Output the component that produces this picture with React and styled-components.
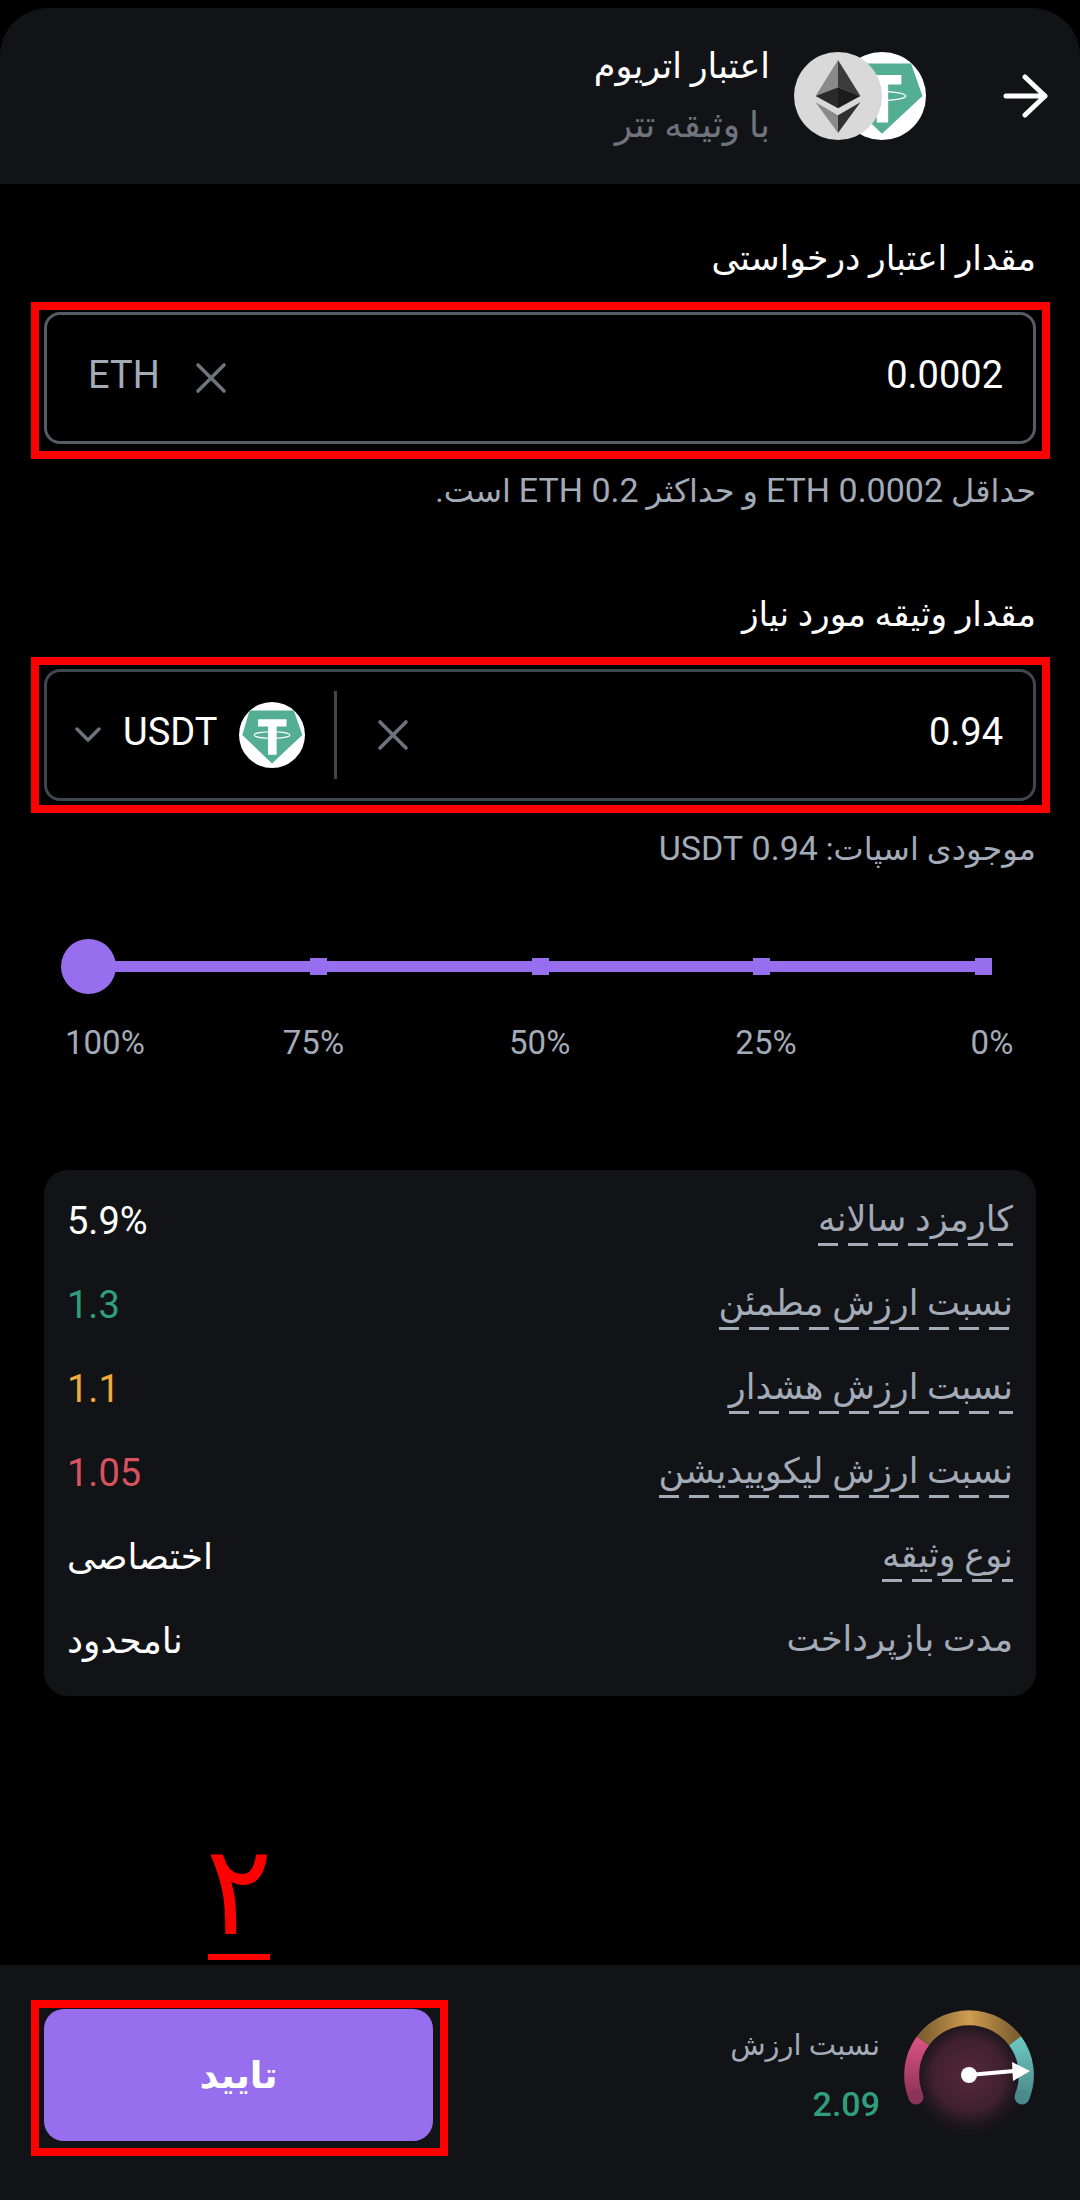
import React from "react";
import styled, { createGlobalStyle } from "styled-components";

const rows = [
  { label: "کارمزد سالانه", value: "5.9%", tone: "#ffffff", size: 38, dashed: true },
  { label: "نسبت ارزش مطمئن", value: "1.3", tone: "#2f9e7c", size: 38, dashed: true },
  { label: "نسبت ارزش هشدار", value: "1.1", tone: "#efa93c", size: 38, dashed: true },
  { label: "نسبت ارزش لیکوییدیشن", value: "1.05", tone: "#d9525e", size: 38, dashed: true },
  { label: "نوع وثیقه", value: "اختصاصی", tone: "#ffffff", size: 36, dashed: true },
  { label: "مدت بازپرداخت", value: "نامحدود", tone: "#ffffff", size: 36, dashed: false },
];

const ticks = [0, 25, 50, 75, 100];

const marks = [
  { label: "100%", gap: 21 },
  { label: "75%", gap: 138 },
  { label: "50%", gap: 165 },
  { label: "25%", gap: 165 },
  { label: "0%", gap: 174 },
];

const TetherLogo = ({ size }) => (
  <svg width={size} height={size} viewBox="0 0 100 100">
    <circle cx="50" cy="50" r="50" fill="#fff" />
    <path d="M16 13H83L96 50 50 93 5 50Z" fill="#53ae94" />
    <path d="M29 26H72V37H57V80H44V37H29Z" fill="#fff" />
    <ellipse cx="50" cy="50" rx="27" ry="5" fill="none" stroke="#fff" strokeWidth="1.6" />
  </svg>
);

const EthLogo = ({ size }) => (
  <svg width={size} height={size} viewBox="0 0 100 100">
    <circle cx="50" cy="50" r="50" fill="#d9d9d9" />
    <path d="M50 9 24.5 50 50 40Z" fill="#8a8a8a" />
    <path d="M50 9 75.5 50 50 40Z" fill="#3b3b3b" />
    <path d="M24.5 50 50 40V64Z" fill="#2a2a2a" />
    <path d="M75.5 50 50 40V64Z" fill="#1c1c1c" />
    <path d="M24.5 57 50 72V92Z" fill="#8a8a8a" />
    <path d="M75.5 57 50 72V92Z" fill="#303030" />
  </svg>
);

const Gauge = () => (
  <svg width="150" height="150" viewBox="0 0 150 150">
    <defs>
      <radialGradient id="glow" cx="50%" cy="50%" r="50%">
        <stop offset="0%" stopColor="#54283a" />
        <stop offset="55%" stopColor="#40202f" />
        <stop offset="100%" stopColor="#121316" stopOpacity="0" />
      </radialGradient>
      <linearGradient id="pink" x1="0" y1="0" x2="0" y2="1">
        <stop offset="0%" stopColor="#d8527f" />
        <stop offset="100%" stopColor="#8b3358" />
      </linearGradient>
      <linearGradient id="gold" x1="0" y1="0" x2="1" y2="0">
        <stop offset="0%" stopColor="#7d6030" />
        <stop offset="50%" stopColor="#d09c50" />
        <stop offset="100%" stopColor="#7d6030" />
      </linearGradient>
      <linearGradient id="teal" x1="0" y1="0" x2="0" y2="1">
        <stop offset="0%" stopColor="#6cc6c0" />
        <stop offset="100%" stopColor="#4a8a8a" />
      </linearGradient>
    </defs>
    <circle cx="75" cy="70" r="66" fill="url(#glow)" />
    <path d="M22 92A57.5 57.5 0 0 1 29 35.7" fill="none" stroke="url(#pink)" strokeWidth="15" />
    <circle cx="22" cy="92" r="7.5" fill="#8b3358" />
    <path d="M29 35.7A57.5 57.5 0 0 1 121 35.7" fill="none" stroke="url(#gold)" strokeWidth="15" />
    <path d="M128 92A57.5 57.5 0 0 0 121 35.7" fill="none" stroke="url(#teal)" strokeWidth="15" />
    <circle cx="128" cy="92" r="7.5" fill="#4a8a8a" />
    <circle cx="75" cy="70" r="8" fill="#fff" />
    <path d="M75 70 120 66" stroke="#fff" strokeWidth="4" />
    <path d="M118 57 136 66 119 76Z" fill="#fff" />
  </svg>
);

const ArrowIcon = () => (
  <svg width="46" height="46" viewBox="0 0 46 46" fill="none" stroke="#fff" strokeWidth="5" strokeLinecap="round" strokeLinejoin="round">
    <path d="M3 23H42M22 4 42 23 22 42" />
  </svg>
);

const CloseIcon = () => (
  <svg width="32" height="32" viewBox="0 0 32 32" fill="none" stroke="#6e747d" strokeWidth="3.6" strokeLinecap="round">
    <path d="M3 3 29 29M29 3 3 29" />
  </svg>
);

const ChevronIcon = () => (
  <svg width="26" height="16" viewBox="0 0 26 16" fill="none" stroke="#6e747d" strokeWidth="3.4" strokeLinecap="round" strokeLinejoin="round">
    <path d="M2 2 13 13 24 2" />
  </svg>
);

const App = () => {
  return (
    <Page>
      <GlobalStyle />
      <Header>
        <ArrowIcon />
        <Logos>
          <TetherSlot>
            <TetherLogo size={88} />
          </TetherSlot>
          <EthSlot>
            <EthLogo size={88} />
          </EthSlot>
        </Logos>
        <HeaderText>
          <HeaderTitle>اعتبار اتریوم</HeaderTitle>
          <HeaderSub>با وثیقه تتر</HeaderSub>
        </HeaderText>
      </Header>

      <Form>
        <Label>مقدار اعتبار درخواستی</Label>
        <FieldWrap>
          <Field $border="#555c66">
            <Value>0.0002</Value>
            <Spacer />
            <FieldClose>
              <CloseIcon />
            </FieldClose>
            <Unit>ETH</Unit>
          </Field>
          <RedBox $top={-10} $bottom={-15} />
        </FieldWrap>
        <Hint>
          حداقل <Latin>0.0002 ETH</Latin> و حداکثر <Latin>0.2 ETH</Latin> است.
        </Hint>

        <SecondLabel>مقدار وثیقه مورد نیاز</SecondLabel>
        <FieldWrap>
          <Field $border="#3f4650">
            <Value>0.94</Value>
            <Spacer />
            <CloseIcon />
            <Divider />
            <TetherLogo size={66} />
            <Coin>USDT</Coin>
            <ChevronIcon />
          </Field>
          <RedBox $top={-12} $bottom={-12} />
        </FieldWrap>
        <SecondHint>
          موجودی اسپات: <Latin>0.94 USDT</Latin>
        </SecondHint>

        <Slider>
          <Track>
            {ticks.map((tick) => (
              <Tick key={tick} />
            ))}
            <Thumb />
          </Track>
          <Marks>
            {marks.map((mark) => (
              <Mark key={mark.label} $gap={mark.gap}>
                {mark.label}
              </Mark>
            ))}
          </Marks>
        </Slider>

        <Card>
          {rows.map((row) => (
            <Row key={row.label}>
              <RowLabel $dashed={row.dashed}>{row.label}</RowLabel>
              <RowValue $tone={row.tone} $size={row.size}>
                {row.value}
              </RowValue>
            </Row>
          ))}
        </Card>
      </Form>

      <Note>
        <NoteDigit>۲</NoteDigit>
        <NoteLine />
      </Note>

      <Footer>
        <GaugeSlot>
          <Gauge />
        </GaugeSlot>
        <Ratio>
          <RatioLabel>نسبت ارزش</RatioLabel>
          <RatioValue>2.09</RatioValue>
        </Ratio>
        <ButtonWrap>
          <Confirm>تایید</Confirm>
          <ButtonBox />
        </ButtonWrap>
      </Footer>
    </Page>
  );
};

const GlobalStyle = createGlobalStyle`
  html, body {
    margin: 0;
    padding: 0;
    background: #000;
  }
  * {
    box-sizing: border-box;
  }
`;

const Page = styled.div`
  width: 1080px;
  height: 2200px;
  direction: rtl;
  display: flex;
  flex-direction: column;
  background: #000;
  color: #fff;
  font-family: Roboto, "DejaVu Sans", sans-serif;
  overflow: hidden;
`;

const Header = styled.header`
  margin-top: 8px;
  height: 176px;
  flex: none;
  display: flex;
  align-items: center;
  padding-right: 31px;
  background: #121316;
  border-radius: 48px 48px 0 0;
`;

const Logos = styled.div`
  position: relative;
  width: 132px;
  height: 88px;
  margin-right: 77px;
`;

const TetherSlot = styled.div`
  position: absolute;
  top: 0;
  right: 0;
  height: 88px;
`;

const EthSlot = styled.div`
  position: absolute;
  top: 0;
  left: 0;
  height: 88px;
`;

const HeaderText = styled.div`
  margin-right: 24px;
  display: flex;
  flex-direction: column;
  gap: 14px;
`;

const HeaderTitle = styled.div`
  font-size: 35px;
  line-height: 44px;
`;

const HeaderSub = styled.div`
  font-size: 36px;
  line-height: 44px;
  color: #6e747d;
`;

const Form = styled.main`
  display: flex;
  flex-direction: column;
  padding: 48px 44px 0;
`;

const Label = styled.div`
  font-size: 34.5px;
  line-height: 52px;
  margin-bottom: 28px;
`;

const SecondLabel = styled(Label)`
  margin-top: 78px;
  margin-bottom: 29px;
`;

const FieldWrap = styled.div`
  position: relative;
  height: 132px;
`;

const RedBox = styled.div`
  position: absolute;
  top: ${(p) => p.$top}px;
  bottom: ${(p) => p.$bottom}px;
  left: -13px;
  right: -14px;
  border: 8px solid #f00;
  pointer-events: none;
`;

const Field = styled.div`
  height: 100%;
  display: flex;
  align-items: center;
  padding: 0 30px 0 28px;
  border: 3px solid ${(p) => p.$border};
  border-radius: 16px;
`;

const Value = styled.div`
  font-size: 38px;
  margin-top: -6px;
`;

const Spacer = styled.div`
  flex: 1;
`;

const FieldClose = styled.div`
  display: flex;
  margin-left: 35px;
`;

const Unit = styled.div`
  font-size: 38px;
  color: #a3abb8;
  margin-left: 13px;
  margin-top: -6px;
`;

const Divider = styled.div`
  width: 3px;
  height: 88px;
  margin: 0 40px 0 29px;
  background: #3f4650;
`;

const Coin = styled.div`
  font-size: 38px;
  margin: -6px 22px 0;
`;

const Hint = styled.div`
  margin-top: 28px;
  height: 38px;
  font-size: 32px;
  line-height: 38px;
  color: #a3abb8;
`;

const SecondHint = styled(Hint)`
  margin-top: 29px;
`;

const Latin = styled.span`
  font-size: 34px;
  line-height: 1;
`;

const Slider = styled.div`
  margin-top: 71px;
  direction: ltr;
`;

const Track = styled.div`
  position: relative;
  margin: 0 44px;
  height: 55px;
  display: flex;
  align-items: center;
  justify-content: space-between;
  background: linear-gradient(#976fee, #976fee) center / 100% 11px no-repeat;
`;

const Tick = styled.div`
  width: 17px;
  height: 17px;
  background: #976fee;
`;

const Thumb = styled.div`
  position: absolute;
  left: -27px;
  top: 0;
  width: 55px;
  height: 55px;
  border-radius: 50%;
  background: #976fee;
`;

const Marks = styled.div`
  margin-top: 29px;
  display: flex;
`;

const Mark = styled.div`
  margin-left: ${(p) => p.$gap}px;
  font-size: 33px;
  line-height: 40px;
  color: #a3abb8;
`;

const Card = styled.section`
  margin-top: 107px;
  height: 526px;
  padding: 9px 23px;
  display: grid;
  grid-auto-rows: 84px;
  background: #121316;
  border-radius: 24px;
`;

const Row = styled.div`
  display: flex;
  align-items: center;
  justify-content: space-between;
`;

const RowLabel = styled.div`
  font-size: 35px;
  line-height: 48px;
  color: #a3abb8;
  padding-bottom: 2px;
  background: ${(p) =>
    p.$dashed
      ? "repeating-linear-gradient(to right, #a3abb8 0 20px, transparent 20px 30px) bottom / 100% 3px no-repeat"
      : "none"};
`;

const RowValue = styled.div`
  font-size: ${(p) => p.$size}px;
  color: ${(p) => p.$tone};
`;

const Note = styled.div`
  flex: 1;
  align-self: flex-end;
  direction: ltr;
  display: flex;
  flex-direction: column;
  align-items: center;
  justify-content: flex-end;
  width: 62px;
  margin-left: 208px;
  padding-bottom: 5px;
`;

const NoteDigit = styled.div`
  font-family: "DejaVu Sans", sans-serif;
  font-size: 125px;
  line-height: 100px;
  color: #f00;
`;

const NoteLine = styled.div`
  width: 62px;
  height: 6px;
  margin-top: 13px;
  background: #f00;
`;

const Footer = styled.footer`
  height: 235px;
  flex: none;
  display: flex;
  align-items: flex-start;
  padding: 40px 36px 0 44px;
  background: #121316;
`;

const GaugeSlot = styled.div`
  display: flex;
`;

const Ratio = styled.div`
  margin-right: 14px;
  display: flex;
  flex-direction: column;
  gap: 21px;
  padding-top: 21px;
`;

const RatioLabel = styled.div`
  font-size: 29px;
  line-height: 38px;
  color: #a3abb8;
`;

const RatioValue = styled.div`
  font-size: 34px;
  font-weight: 500;
  line-height: 38px;
  color: #2f9e7c;
`;

const ButtonWrap = styled.div`
  position: relative;
  margin-right: auto;
  margin-top: 4px;
  width: 389px;
  height: 132px;
`;

const Confirm = styled.button`
  width: 100%;
  height: 100%;
  border: 0;
  border-radius: 20px;
  background: #976fee;
  color: #fff;
  font-family: "DejaVu Sans", sans-serif;
  font-size: 37px;
  font-weight: 700;
`;

const ButtonBox = styled.div`
  position: absolute;
  top: -9px;
  right: -15px;
  bottom: -15px;
  left: -13px;
  border: 8px solid #f00;
`;

export default App;
